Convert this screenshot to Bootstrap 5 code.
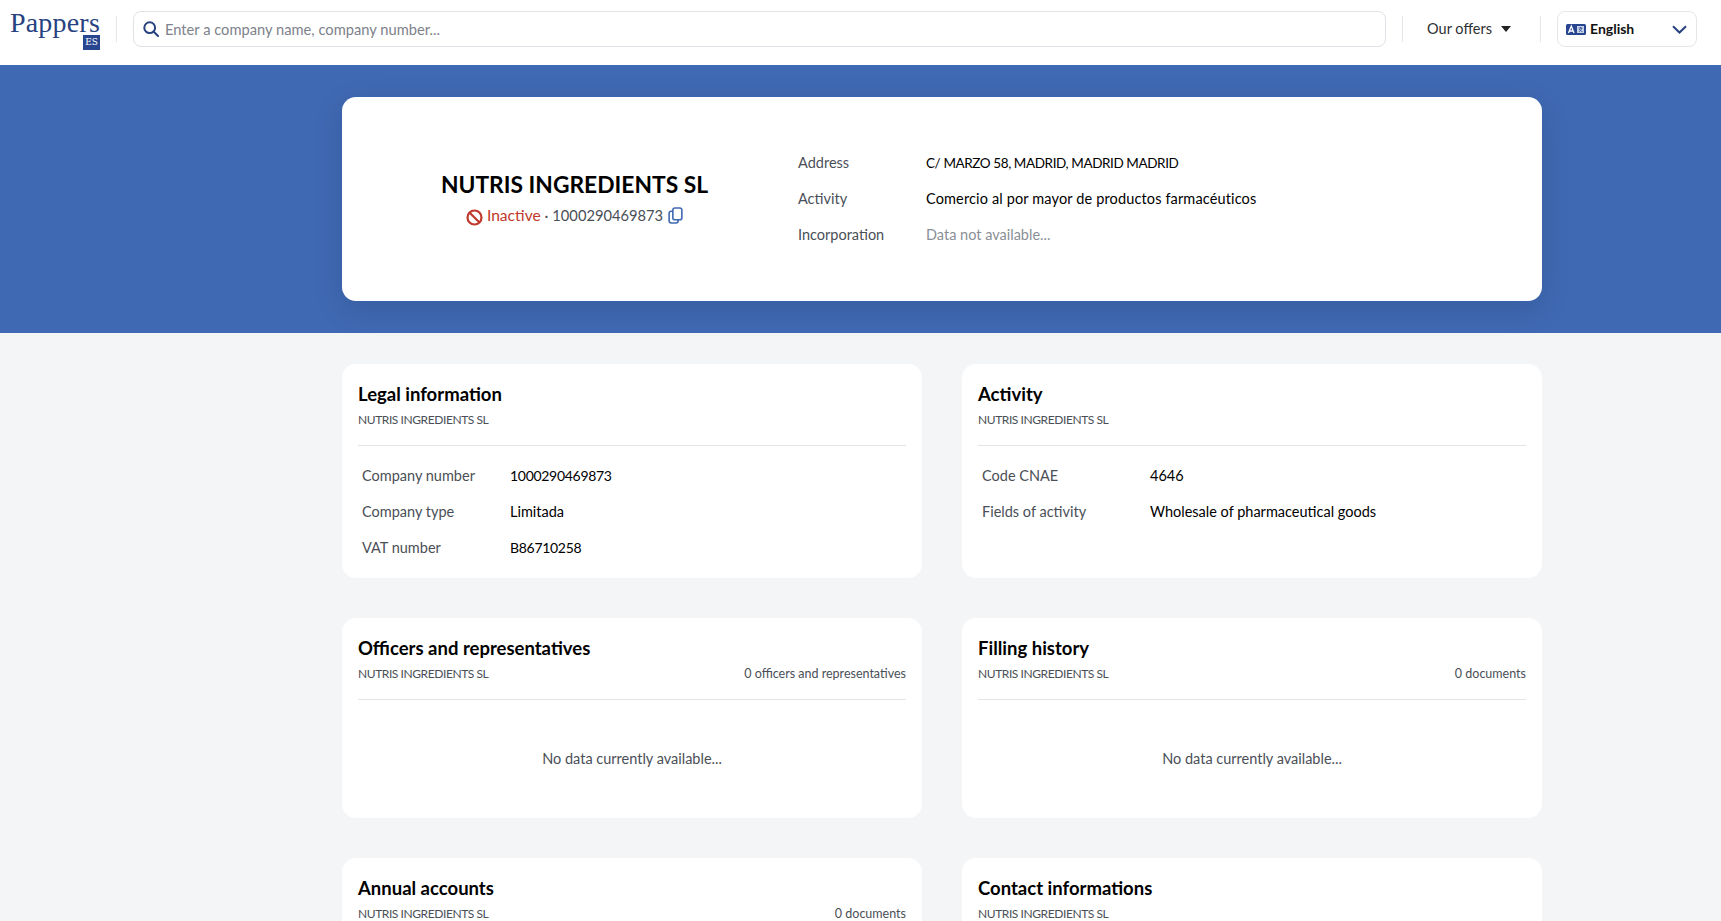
<!DOCTYPE html>
<html lang="en">
<head>
  <meta charset="UTF-8" />
  <meta name="viewport" content="width=device-width, initial-scale=1.0" />
  <title>Nutris Ingredients SL</title>
  <link href="https://cdn.jsdelivr.net/npm/bootstrap@5.3.3/dist/css/bootstrap.min.css" rel="stylesheet">
  <style>
    body {
      font-family: "Lato", "Liberation Sans", sans-serif;
      font-size: 15px;
      color: #4a4f57;
      background-color: #f4f5f7;
      overflow: hidden;
    }

    .topbar {
      height: 65px;
      background-color: #fff;
      padding: 0 24px 7px 8px;
    }

    .logo-box {
      width: 92px;
    }

    .logo-name {
      font-family: "Liberation Serif", serif;
      font-size: 28px;
      line-height: 26px;
      color: #27427f;
      letter-spacing: .2px;
      margin: 1px 0 -1px;
    }

    .logo-es {
      width: 17px;
      height: 15px;
      background-color: #27468f;
      color: #fff;
      font-family: "DejaVu Serif", serif;
      font-size: 9px;
      line-height: 15px;
      text-align: center;
    }

    .bar-sep {
      width: 1px;
      height: 26px;
      background-color: #e4e6ea;
    }

    .search-box {
      height: 36px;
      border: 1px solid #dfe2e7;
      border-radius: 8px;
      padding: 0 10px 0 9px;
      color: #7d828b;
      font-size: 14.7px;
      gap: 6px;
    }

    .offers {
      color: #2d2f33;
      font-size: 14.5px;
      padding: 0 13px 0 8px;
    }

    .caret-down {
      width: 0;
      height: 0;
      border-left: 5.5px solid transparent;
      border-right: 5.5px solid transparent;
      border-top: 6px solid #222;
      margin-left: 1px;
    }

    .lang-box {
      width: 140px;
      height: 36px;
      border: 1px solid #e4e6ea;
      border-radius: 8px;
      padding: 0 9px 0 8px;
      color: #111;
      font-weight: 700;
      font-size: 14px;
    }

    .lang-label {
      padding-bottom: 2px;
    }

    .hero {
      background-color: #3f69b3;
      padding: 32px 0;
    }

    .page-width {
      width: 1200px;
      margin-left: 342px;
    }

    .hero-card {
      height: 204px;
      background-color: #fff;
      border-radius: 14px;
      box-shadow: 0 8px 30px rgba(0, 0, 0, .12);
    }

    .hero-left {
      width: 456px;
      padding: 0 0 1px 9px;
    }

    .company-name {
      font-size: 22.8px;
      font-weight: 700;
      color: #000;
      line-height: 30px;
      margin: 0 0 5px;
    }

    .status-red {
      color: #c0392b;
      font-size: 15.6px;
    }

    .reg-number {
      font-size: 14.7px;
    }

    .copy-icon {
      margin: -4px 0 0 1px;
    }

    .hero-facts {
      display: grid;
      grid-template-columns: 128px auto;
      row-gap: 16px;
      line-height: 20px;
      font-size: 14.5px;
    }

    .fact-value {
      color: #000;
    }

    .fact-address {
      font-size: 13.5px;
      letter-spacing: -.4px;
    }

    .fact-wide {
      letter-spacing: .14px;
    }

    .fact-empty {
      color: #8a8f97;
    }

    .tight-num {
      font-size: 14px;
      letter-spacing: -.3px;
    }

    .cards-grid {
      display: grid;
      grid-template-columns: 580px 580px;
      column-gap: 40px;
      row-gap: 40px;
      margin-top: 31px;
    }

    .info-card {
      background-color: #fff;
      border-radius: 14px;
      padding: 18px 16px 0;
    }

    .info-title {
      font-size: 18.5px;
      font-weight: 700;
      color: #000;
      line-height: 24px;
      margin: 0 0 5px;
    }

    .info-sub {
      font-size: 12.5px;
      line-height: 18px;
      color: #4a4f57;
      padding-bottom: 16px;
      border-bottom: 1px solid #e2e4e8;
    }

    .caps-name {
      font-size: 12px;
      letter-spacing: -.42px;
    }

    .info-rows {
      display: grid;
      row-gap: 16px;
      padding: 20px 4px 20px;
      line-height: 20px;
      font-size: 14.5px;
    }

    .label-col-a {
      width: 148px;
    }

    .label-col-b {
      width: 168px;
    }

    .no-data {
      height: 118px;
      font-size: 14.5px;
    }
  </style>
</head>
<body>

  <header class="topbar d-flex align-items-center">
    <div class="logo-box d-flex flex-column align-items-end flex-shrink-0">
      <div class="logo-name">Pappers</div>
      <div class="logo-es">ES</div>
    </div>
    <div class="bar-sep mx-3 flex-shrink-0"></div>
    <div class="search-box d-flex align-items-center flex-grow-1">
      <svg width="16" height="16" viewBox="0 0 16 16" fill="none" stroke="#27427f" stroke-width="2" stroke-linecap="round"><circle cx="6.7" cy="6.7" r="5.4"/><path d="M10.8 10.8 15 15"/></svg>
      <span>Enter a company name, company number...</span>
    </div>
    <div class="bar-sep mx-3 flex-shrink-0"></div>
    <div class="offers d-flex align-items-center gap-2 flex-shrink-0">Our offers <span class="caret-down"></span></div>
    <div class="bar-sep mx-3 flex-shrink-0"></div>
    <div class="lang-box d-flex align-items-center flex-shrink-0">
      <svg class="me-1" width="20" height="11" viewBox="0 0 20 11"><rect width="20" height="11" rx="1.5" fill="#27468f"/><rect x="11" y="2" width="7" height="7" fill="#c8d3e8"/><path d="M2.5 9 5.3 2 8 9M3.5 7h3.6" fill="none" stroke="#fff" stroke-width="1.3"/><path d="M12.5 4h4M14.5 3v1.5M15.8 4c-.4 2-1.800 3.200-3 3.700M13.200 5c.6 1.300 1.800 2.200 3.300 2.700" fill="none" stroke="#27468f" stroke-width=".8"/></svg>
      <span class="lang-label flex-grow-1">English</span>
      <svg width="15" height="9" viewBox="0 0 15 9" fill="none" stroke="#27427f" stroke-width="2"><path d="M1 1.200 7.500 7.500 14 1.200"/></svg>
    </div>
  </header>

  <section class="hero">
    <div class="page-width hero-card d-flex align-items-center">
      <div class="hero-left text-center">
        <h1 class="company-name">NUTRIS INGREDIENTS SL</h1>
        <div>
          <svg width="17" height="17" viewBox="0 0 17 17" fill="none" stroke="#c0392b" stroke-width="2.200"><circle cx="8.500" cy="8.500" r="7"/><path d="M3.500 3.500 13.500 13.500"/></svg>
          <span class="status-red">Inactive</span> · <span class="reg-number">1000290469873</span>
          <svg class="copy-icon" width="15" height="17" viewBox="0 0 14 16" fill="none" stroke="#3f69b3" stroke-width="1.500"><rect x="4.500" y="1" width="8.500" height="11" rx="2"/><path d="M4.500 4H3a2 2 0 0 0-2 2v7a2 2 0 0 0 2 2h4.500a2 2 0 0 0 2-2v-1"/></svg>
        </div>
      </div>
      <div class="hero-facts">
        <div>Address</div><div class="fact-value fact-address">C/ MARZO 58, MADRID, MADRID MADRID</div>
        <div>Activity</div><div class="fact-value fact-wide">Comercio al por mayor de productos farmacéuticos</div>
        <div>Incorporation</div><div class="fact-empty">Data not available...</div>
      </div>
    </div>
  </section>

  <main class="page-width cards-grid">
    <div class="info-card">
      <h2 class="info-title">Legal information</h2>
      <div class="info-sub"><span class="caps-name">NUTRIS INGREDIENTS SL</span></div>
      <div class="info-rows">
        <div class="row g-0"><div class="col-auto label-col-a">Company number</div><div class="col fact-value tight-num">1000290469873</div></div>
        <div class="row g-0"><div class="col-auto label-col-a">Company type</div><div class="col fact-value">Limitada</div></div>
        <div class="row g-0"><div class="col-auto label-col-a">VAT number</div><div class="col fact-value tight-num">B86710258</div></div>
      </div>
    </div>
    <div class="info-card">
      <h2 class="info-title">Activity</h2>
      <div class="info-sub"><span class="caps-name">NUTRIS INGREDIENTS SL</span></div>
      <div class="info-rows">
        <div class="row g-0"><div class="col-auto label-col-b">Code CNAE</div><div class="col fact-value">4646</div></div>
        <div class="row g-0"><div class="col-auto label-col-b">Fields of activity</div><div class="col fact-value">Wholesale of pharmaceutical goods</div></div>
      </div>
    </div>
    <div class="info-card">
      <h2 class="info-title">Officers and representatives</h2>
      <div class="info-sub d-flex justify-content-between"><span class="caps-name">NUTRIS INGREDIENTS SL</span><span>0 officers and representatives</span></div>
      <div class="no-data d-flex align-items-center justify-content-center">No data currently available...</div>
    </div>
    <div class="info-card">
      <h2 class="info-title">Filling history</h2>
      <div class="info-sub d-flex justify-content-between"><span class="caps-name">NUTRIS INGREDIENTS SL</span><span>0 documents</span></div>
      <div class="no-data d-flex align-items-center justify-content-center">No data currently available...</div>
    </div>
    <div class="info-card">
      <h2 class="info-title">Annual accounts</h2>
      <div class="info-sub d-flex justify-content-between"><span class="caps-name">NUTRIS INGREDIENTS SL</span><span>0 documents</span></div>
    </div>
    <div class="info-card">
      <h2 class="info-title">Contact informations</h2>
      <div class="info-sub"><span class="caps-name">NUTRIS INGREDIENTS SL</span></div>
    </div>
  </main>

  <script src="https://cdn.jsdelivr.net/npm/bootstrap@5.3.3/dist/js/bootstrap.bundle.min.js"></script>
</body>
</html>
